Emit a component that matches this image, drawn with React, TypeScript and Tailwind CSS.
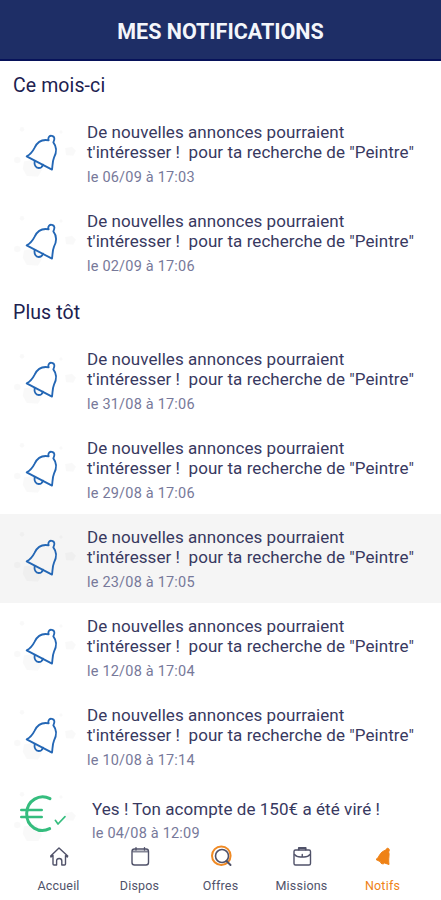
import React from "react";

interface NotificationProps {
  date: string;
  isSelected?: boolean;
}

interface NavItemProps {
  label: string;
  isActive?: boolean;
  children: React.ReactNode;
}

const thisMonth: NotificationProps[] = [
  { date: "le 06/09 à 17:03" },
  { date: "le 02/09 à 17:06" },
];

const earlier: NotificationProps[] = [
  { date: "le 31/08 à 17:06" },
  { date: "le 29/08 à 17:06" },
  { date: "le 23/08 à 17:05", isSelected: true },
  { date: "le 12/08 à 17:04" },
  { date: "le 10/08 à 17:14" },
];

function Blobs() {
  return (
    <g fill="#000" fillOpacity="0.022">
      <circle cx="36" cy="28" r="7" />
      <circle cx="153" cy="36" r="5" />
      <path d="M165 84L186 80L198 92L190 107L168 106Z" />
      <circle cx="22" cy="120" r="10" />
      <path d="M42 124L80 118L96 150L84 170L50 168L38 146Z" />
    </g>
  );
}

function BellIcon() {
  return (
    <svg className="mt-[11px] size-[70px] shrink-0" viewBox="0 0 210 210" fill="none">
      <Blobs />
      <g stroke="#2467b5" strokeWidth="5.5" strokeLinejoin="round" strokeLinecap="round">
        <path d="M116 61C112 51 120 45 127 48C134 50 135 57 130 67C142 82 141 95 132 113C127 125 128 137 126 149L50 109C62 103 68 95 74 83C82 66 94 57 116 61Z" />
        <path d="M74 123C72 134 77 144 86 144C92 144 97 140 99 134" />
      </g>
    </svg>
  );
}

function EuroIcon() {
  return (
    <svg className="mt-[4px] h-[60px] w-[70px] shrink-0" viewBox="0 0 210 180" fill="none">
      <Blobs />
      <g stroke="#35bd7e" strokeLinecap="round" strokeLinejoin="round">
        <path strokeWidth="9" d="M120 41C89 25 51 46 50 85C49 126 88 147 119 131" />
        <path strokeWidth="8" d="M34 75H95M34 96H95" />
        <path strokeWidth="5" d="M136 106L144 117L165 95" />
      </g>
    </svg>
  );
}

function Notification({ date, isSelected }: NotificationProps) {
  return (
    <div className={`flex h-[89px] pl-[10px] ${isSelected ? "bg-[#f5f5f5]" : "bg-white"}`}>
      <BellIcon />
      <div className="ml-[7px] pt-[13px] whitespace-pre">
        <p className="text-[17px] leading-[20.4px] tracking-[0.06px] text-[#38395f]">
          De nouvelles annonces pourraient{"\n"}t'intéresser !{"  "}pour ta recherche de "Peintre"
        </p>
        <p className="mt-[6.2px] text-[14.5px] leading-[18px] tracking-[0.2px] text-[#77799a]">{date}</p>
      </div>
    </div>
  );
}

function NavItem({ label, isActive, children }: NavItemProps) {
  return (
    <div
      className={`flex w-[81px] flex-col items-center ${
        isActive ? "text-[#ef8216]" : "text-[#505269]"
      }`}
    >
      <svg
        className="size-[26px]"
        viewBox="0 0 26 26"
        fill="none"
        stroke="currentColor"
        strokeWidth="1.4"
        strokeLinecap="round"
        strokeLinejoin="round"
      >
        {children}
      </svg>
      <span className="mt-[9px] text-[12.5px] leading-[16px] tracking-[0.2px]">{label}</span>
    </div>
  );
}

export default function App() {
  return (
    <div className="flex h-[900px] w-[441px] flex-col overflow-hidden bg-white font-['Roboto',sans-serif]">
      <header className="flex h-[61px] shrink-0 items-center justify-center border-b-2 border-[#07125a] bg-[#1e2e66] pt-[5px]">
        <h1 className="text-[21.5px] font-bold text-[#f4f6fb]">MES NOTIFICATIONS</h1>
      </header>

      <main className="h-[780px] shrink-0 overflow-hidden">
        <h2 className="h-[48px] pt-[13px] pl-[13px] text-[19.5px] leading-[24px] tracking-[0.1px] text-[#20214f]">Ce mois-ci</h2>
        {thisMonth.map((item) => (
          <Notification key={item.date} {...item} />
        ))}
        <h2 className="h-[49px] pt-[14px] pl-[13px] text-[19.5px] leading-[24px] tracking-[0.1px] text-[#20214f]">Plus tôt</h2>
        {earlier.map((item) => (
          <Notification key={item.date} {...item} />
        ))}
        <div className="flex pl-[10px]">
          <EuroIcon />
          <div className="ml-[12px] pt-[18px] whitespace-nowrap">
            <p className="text-[17px] leading-[20px] tracking-[0.06px] text-[#38395f]">
              Yes ! Ton acompte de 150€ a été viré !
            </p>
            <p className="mt-[6px] text-[14.5px] leading-[18px] tracking-[0.2px] text-[#77799a]">
              le 04/08 à 12:09
            </p>
          </div>
        </div>
      </main>

      <nav className="flex justify-center pt-[2px]">
        <NavItem label="Accueil">
          <path d="M7 12.5L5 14L4.7 13L13 5L21.7 13L21.3 14L19.5 12.7V21Q19.5 22 18.5 22H15.8V18Q15.8 15.5 13.2 15.500T10.600 18V22H8Q7 22 7 21Z" />
        </NavItem>
        <NavItem label="Dispos">
          <rect x="5" y="6" width="16.5" height="16" rx="2.5" />
          <path strokeWidth="1.8" d="M6 8.500H20.500" strokeOpacity="0.7" />
          <path d="M9 4.800V7M17.500 4.800V7" />
        </NavItem>
        <NavItem label="Offres">
          <circle cx="13.300" cy="12.700" r="9.300" stroke="#f08a24" strokeWidth="2" />
          <circle cx="14" cy="13" r="6.500" strokeWidth="1.600" />
          <path strokeWidth="2" d="M18.500 18L22.500 22" />
        </NavItem>
        <NavItem label="Missions">
          <rect x="5" y="7" width="16.500" height="15" rx="1.500" />
          <path strokeWidth="1.800" d="M9.800 6.500V5H16.700V6.500" />
          <path d="M5.500 11.500Q7.500 14 11.500 14H15Q19 14 21 11.500M13.250 11.500V14" />
        </NavItem>
        <NavItem label="Notifs" isActive>
          <path
            fill="currentColor"
            strokeWidth="1"
            d="M16 7C16 4.500 19.500 4.500 19.300 7.500L18.600 9C20 12 18 14.500 19 21.500L14.500 20C13.500 21.500 10.500 21 10.500 18.800L6 16.500C9.500 14.500 9 9 16 7Z"
          />
        </NavItem>
      </nav>
    </div>
  );
}
